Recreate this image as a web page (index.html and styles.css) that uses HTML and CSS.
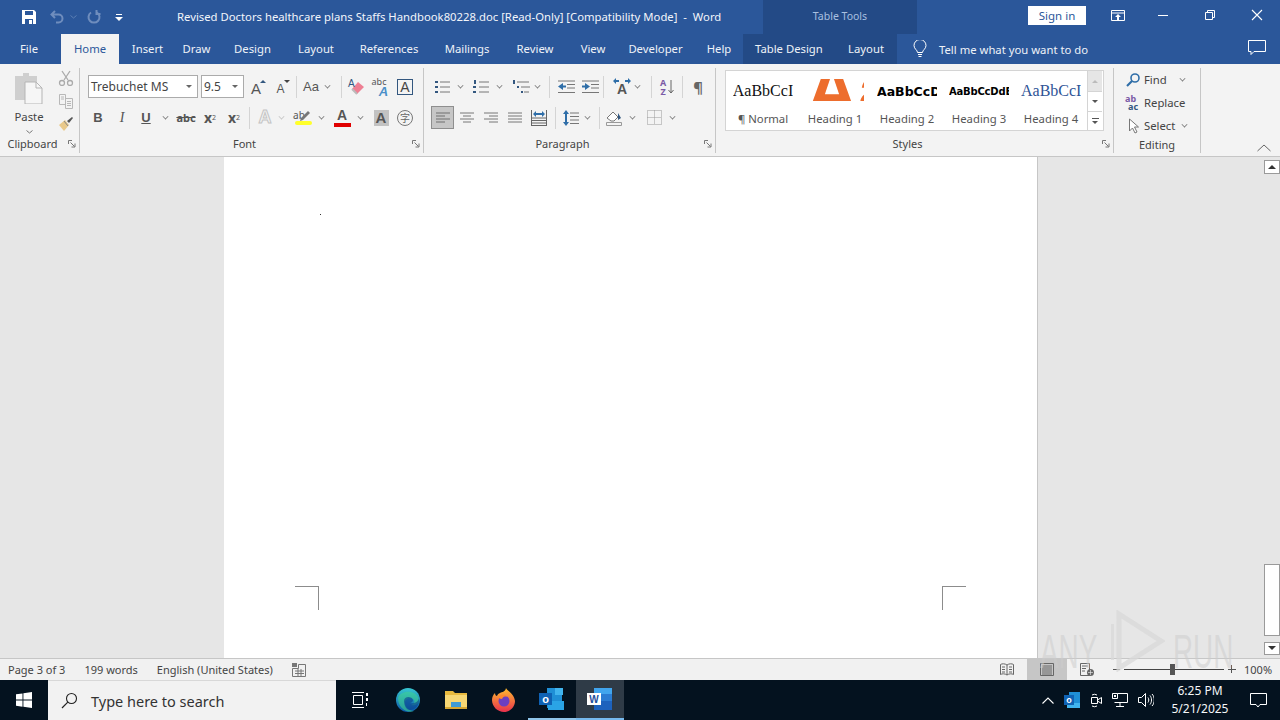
FILE: index.html
```html
<!DOCTYPE html>
<html lang="en">
<head>
    <meta charset="UTF-8">
    <title>Revised Doctors healthcare plans Staffs Handbook80228.doc - Word</title>
    <link rel="stylesheet" href="styles.css">
</head>
<body>
    <!-- Title bar -->
    <header class="titlebar">
        <div class="qat">
            <svg class="qat-save" width="16" height="16" viewBox="0 0 16 16"><path d="M1 1h12l2 2v12H1z" fill="#fff"/><path d="M4 2h8v4H4zM4 10h8v5H4z" fill="#2b579a"/><path d="M8 11h3v4H8z" fill="#fff"/></svg>
            <svg class="qat-undo" width="16" height="14" viewBox="0 0 16 14"><path d="M5 1L1.500 4.500 5 8M2 4.500h6.500a4 4 0 0 1 0 8H6" fill="none" stroke="#6f8dbd" stroke-width="2"/></svg>
            <svg class="qat-caret" width="7" height="4" viewBox="0 0 7 4"><path d="M.5.500l3 2.500 3-2.500" fill="none" stroke="#5c7fb4"/></svg>
            <svg class="qat-redo" width="14" height="14" viewBox="0 0 14 14"><path d="M4 2.500a5.500 5.500 0 1 0 6 0M9.500 0v4h4" fill="none" stroke="#6f8dbd" stroke-width="2"/></svg>
            <svg class="qat-more" width="8" height="8" viewBox="0 0 8 8"><path d="M1 1h6v1H1zM0 4h8L4 8z" fill="#fff"/></svg>
        </div>
        <div class="doc-title">Revised Doctors healthcare plans Staffs Handbook80228.doc [Read-Only] [Compatibility Mode]&nbsp; - &nbsp;Word</div>
        <div class="context-head">Table Tools</div>
        <div class="window-tools">
            <button class="signin">Sign in</button>
            <svg class="win-display" width="14" height="12" viewBox="0 0 14 12"><path d="M.5.500h13v10H.500zM.5 3h13" fill="none" stroke="#fff"/><path d="M7 4l3 3H8v3H6V7H4z" fill="#fff"/></svg>
            <svg class="win-min" width="10" height="1" viewBox="0 0 10 1"><path d="M0 0h10v1H0z" fill="#fff"/></svg>
            <svg class="win-max" width="10" height="10" viewBox="0 0 10 10"><path d="M.5 2.500h7v7h-7zM2.500 2.500v-2h7v7h-2" fill="none" stroke="#fff"/></svg>
            <svg class="win-close" width="12" height="12" viewBox="0 0 12 12"><path d="M1 1l10 10M11 1L1 11" stroke="#fff" stroke-width="1.100"/></svg>
        </div>
    </header>

    <!-- Tabs -->
    <nav class="tabs">
        <div class="tab tab-file">File</div>
        <div class="tab tab-home">Home</div>
        <div class="tab tab-insert">Insert</div>
        <div class="tab tab-draw">Draw</div>
        <div class="tab tab-design">Design</div>
        <div class="tab tab-layout">Layout</div>
        <div class="tab tab-refs">References</div>
        <div class="tab tab-mail">Mailings</div>
        <div class="tab tab-review">Review</div>
        <div class="tab tab-view">View</div>
        <div class="tab tab-dev">Developer</div>
        <div class="tab tab-help">Help</div>
        <div class="context-tabs">
            <div class="tab">Table Design</div>
            <div class="tab">Layout</div>
        </div>
        <div class="tell-me">
            <svg width="14" height="18" viewBox="0 0 14 18"><path d="M4.500 12.500C4.500 10 1 9 1 5.500a6 6 0 0 1 12 0C13 9 9.500 10 9.500 12.500zM5 14.500h4M5.500 16.500h3" fill="none" stroke="#fff"/></svg>
            <span>Tell me what you want to do</span>
        </div>
        <svg class="comment-btn" width="18" height="16" viewBox="0 0 18 16"><path d="M.5.500h17v11H6l-3 3v-3H.500z" fill="none" stroke="#fff"/></svg>
    </nav>

    <!-- Ribbon -->
    <section class="ribbon">
        <div class="group group-clipboard">
            <div class="clipboard-body">
                <div class="paste">
                    <svg width="30" height="32" viewBox="0 0 30 32"><path d="M1 4h8V1h6v3h8v24H1z" fill="#cfcfcf"/><path d="M11 10h11l6 6v16H11z" fill="#f6f6f6" stroke="#b5b5b5"/><path d="M22 10v6h6" fill="none" stroke="#b5b5b5"/></svg>
                    <span class="paste-label">Paste</span>
                    <svg width="7" height="4" viewBox="0 0 7 4"><path d="M.5.500l3 2.500 3-2.500" fill="none" stroke="#777"/></svg>
                </div>
                <div class="clip-tools">
                    <svg width="16" height="16" viewBox="0 0 16 16"><path d="M4 1l6 9M12 1l-6 9" stroke="#aaa" stroke-width="1.300" fill="none"/><circle cx="4" cy="13" r="2.500" fill="none" stroke="#aaa" stroke-width="1.300"/><circle cx="12" cy="13" r="2.500" fill="none" stroke="#aaa" stroke-width="1.300"/></svg>
                    <svg width="16" height="16" viewBox="0 0 16 16"><path d="M1.500 1.500h6v10h-6zM7.500 5.500h7v10h-7zM9 8.500h4M9 10.500h4M9 12.500h4M3 4h3M3 6h3" fill="none" stroke="#b8b8b8"/></svg>
                    <svg width="16" height="16" viewBox="0 0 16 16"><path d="M1 9l6-5 4 5-5 6z" fill="#e9c98a"/><path d="M9 5l5-4 1 1-4 5z" fill="#555"/><path d="M6 5l4 5" stroke="#888"/></svg>
                </div>
            </div>
            <div class="group-foot"><span class="group-name">Clipboard</span><svg class="launcher" width="8" height="8" viewBox="0 0 8 8"><path d="M.5 4V.500H4M2.500 2.500l4 4M7 3.500V7H3.500" fill="none" stroke="#777"/></svg></div>
        </div>

        <div class="group group-font">
            <div class="group-rows">
                <div class="row row-font1">
                    <div class="combo combo-font"><span>Trebuchet MS</span><i class="combo-arrow"></i></div>
                    <div class="combo combo-size ml3"><span>9.5</span><i class="combo-arrow"></i></div>
                    <div class="btn w24 ml2"><span class="glyph-a big">A</span><i class="mark-up"></i></div>
                    <div class="btn w24"><span class="glyph-a small">A</span><i class="mark-down"></i></div>
                    <i class="sep mx2"></i>
                    <div class="btn w24"><span class="glyph-aa">Aa</span></div>
                    <div class="btn w8"><i class="caret"></i></div>
                    <i class="sep ml10 mr3"></i>
                    <div class="btn w24">
                        <svg width="18" height="16" viewBox="0 0 18 16"><path d="M9 15l-5-5 6-7 6 5z" fill="#ee7f93"/><path d="M4 10l5 5" stroke="#bbb" stroke-width="2"/></svg>
                        <span class="eraser-a">A</span>
                    </div>
                    <div class="btn w24 stack-abc"><span class="abc-top">abc</span><span class="abc-a">A</span></div>
                    <div class="btn w24"><span class="boxed-a">A</span></div>
                </div>
                <div class="row row-font2">
                    <div class="btn w24 fmt fmt-b">B</div>
                    <div class="btn w24 fmt fmt-i">I</div>
                    <div class="btn w24 fmt fmt-u">U</div>
                    <div class="btn w14"><i class="caret"></i></div>
                    <div class="btn w24 ml2 fmt-strike">abc</div>
                    <div class="btn w24 fmt-script">x<sub>2</sub></div>
                    <div class="btn w24 fmt-script">x<sup>2</sup></div>
                    <i class="sep mx3"></i>
                    <div class="btn w24"><span class="effect-a">A</span></div>
                    <div class="btn w8"><i class="caret caret-light"></i></div>
                    <div class="btn w24 ml6 stack-color"><span class="ab-text">ab</span><svg class="pen" width="12" height="12" viewBox="0 0 12 12"><path d="M1 11l1-3 7-7 2 2-7 7z" fill="#777"/></svg><i class="bar bar-yellow"></i></div>
                    <div class="btn w12"><i class="caret"></i></div>
                    <div class="btn w24 ml3 stack-color"><span class="color-a">A</span><i class="bar bar-red"></i></div>
                    <div class="btn w12"><i class="caret"></i></div>
                    <div class="btn w24 ml3"><span class="shade-a">A</span></div>
                    <div class="btn w24"><span class="circle-char">字</span></div>
                </div>
            </div>
            <div class="group-foot"><span class="group-name">Font</span><svg class="launcher" width="8" height="8" viewBox="0 0 8 8"><path d="M.5 4V.500H4M2.500 2.500l4 4M7 3.500V7H3.500" fill="none" stroke="#777"/></svg></div>
        </div>

        <div class="group group-para">
            <div class="group-rows">
                <div class="row row-para1">
                    <div class="btn w24"><svg width="16" height="14" viewBox="0 0 16 14"><path d="M5 2h10M5 7h10M5 12h10" stroke="#777"/><path d="M0 1h3v2H0zM0 6h3v2H0zM0 11h3v2H0z" fill="#33577f"/></svg></div>
                    <div class="btn w10"><i class="caret"></i></div>
                    <div class="btn w24 ml4"><svg width="16" height="14" viewBox="0 0 16 14"><path d="M6 2h10M6 7h10M6 12h10" stroke="#777"/><path d="M1 0h2v4H1zM0 6h3v2H0zM0 11h3v2H0z" fill="#33577f"/></svg></div>
                    <div class="btn w12"><i class="caret"></i></div>
                    <div class="btn w24 ml5"><svg width="18" height="14" viewBox="0 0 18 14"><path d="M4 2h12M8 7h9M11 12h5" stroke="#777"/><path d="M0 0h2v4H0zM4 6h2v2H4zM8 11h2v2H8z" fill="#33577f"/></svg></div>
                    <div class="btn w6"><i class="caret"></i></div>
                    <i class="sep ml9 mr4"></i>
                    <div class="btn w24"><svg width="18" height="14" viewBox="0 0 18 14"><path d="M1 1h17M10 4.500h8M10 8h8M1 12.500h17" stroke="#777"/><path d="M1 6.500L6 3v2.500h3v2H6V10z" fill="#2f6ea8"/></svg></div>
                    <div class="btn w24"><svg width="18" height="14" viewBox="0 0 18 14"><path d="M1 1h17M10 4.500h8M10 8h8M1 12.500h17" stroke="#777"/><path d="M9 6.500L4 3v2.500H1v2h3V10z" fill="#2f6ea8"/></svg></div>
                    <i class="sep ml1"></i>
                    <div class="btn w24 ml6 stack-spacing"><svg width="18" height="6" viewBox="0 0 18 6"><path d="M0 3l3-3v2h3v2H3v2zM18 3l-3-3v2h-3v2h3v2z" fill="#2f6ea8"/></svg><span class="spacing-a">A</span></div>
                    <div class="btn w6"><i class="caret"></i></div>
                    <i class="sep ml11 mr3"></i>
                    <div class="btn w24 sort-az"><span class="az">A<br>Z</span><svg width="6" height="14" viewBox="0 0 6 14"><path d="M3 0v13M.5 10L3 13l2.500-3" fill="none" stroke="#666"/></svg></div>
                    <i class="sep mx3"></i>
                    <div class="btn w24 pilcrow">¶</div>
                </div>
                <div class="row row-para2">
                    <div class="btn w24 align-on"><svg width="14" height="12" viewBox="0 0 14 12"><path d="M0 1h14M0 4h9M0 7h14M0 10h9" stroke="#6e6e6e"/></svg></div>
                    <div class="btn w24"><svg width="14" height="12" viewBox="0 0 14 12"><path d="M0 1h14M3 4h8M0 7h14M3 10h8" stroke="#777"/></svg></div>
                    <div class="btn w24"><svg width="14" height="12" viewBox="0 0 14 12"><path d="M0 1h14M5 4h9M0 7h14M5 10h9" stroke="#777"/></svg></div>
                    <div class="btn w24"><svg width="14" height="12" viewBox="0 0 14 12"><path d="M0 1h14M0 4h14M0 7h14M0 10h14" stroke="#777"/></svg></div>
                    <div class="btn w24"><svg width="16" height="16" viewBox="0 0 16 16"><path d="M.5 0v16M15.500 0v16M0 8h16M0 10.500h16M0 13h16M0 15.500h16" stroke="#666"/><path d="M2 4l3-3v2h6V1l3 3-3 3V5H5v2z" fill="#2f6ea8"/></svg></div>
                    <i class="sep ml4 mr3"></i>
                    <div class="btn w24"><svg width="16" height="16" viewBox="0 0 16 16"><path d="M7 3h9M7 6.500h9M7 10h9M7 13.500h9" stroke="#777"/><path d="M3 0l3 4H4v8h2l-3 4-3-4h2V4H0z" fill="#2f6ea8"/></svg></div>
                    <div class="btn w8"><i class="caret"></i></div>
                    <i class="sep ml8 mr3"></i>
                    <div class="btn w24"><svg width="18" height="16" viewBox="0 0 18 16"><path d="M1 8l6-6 5 5-4 4H5z" fill="#fff" stroke="#777"/><path d="M12 3l3 5-3 2z" fill="#33577f"/><path d="M.5 12.500h15v3H.500z" fill="#f3f3f3" stroke="#999"/></svg></div>
                    <div class="btn w10"><i class="caret"></i></div>
                    <div class="btn w24 ml5"><svg width="15" height="15" viewBox="0 0 15 15"><path d="M.5.500h14v14H.500zM7.500.500v14M.5 7.500h14" fill="none" stroke="#999" stroke-dasharray="1 1"/></svg></div>
                    <div class="btn w12"><i class="caret"></i></div>
                </div>
            </div>
            <div class="group-foot"><span class="group-name">Paragraph</span><svg class="launcher" width="8" height="8" viewBox="0 0 8 8"><path d="M.5 4V.500H4M2.500 2.500l4 4M7 3.500V7H3.500" fill="none" stroke="#777"/></svg></div>
        </div>

        <div class="group group-styles">
            <div class="gallery-wrap">
                <div class="gallery">
                    <div class="style-item"><div class="preview pv-normal">AaBbCcI</div><div class="style-name">¶ Normal</div></div>
                    <div class="style-item"><div class="preview pv-h1"><span>AaB</span></div><div class="style-name">Heading 1</div></div>
                    <div class="style-item"><div class="preview pv-h2">AaBbCcD</div><div class="style-name">Heading 2</div></div>
                    <div class="style-item"><div class="preview pv-h3">AaBbCcDdE</div><div class="style-name">Heading 3</div></div>
                    <div class="style-item"><div class="preview pv-h4">AaBbCcI</div><div class="style-name">Heading 4</div></div>
                    <div class="gallery-scroll">
                        <div class="gs-btn gs-up"><i class="tri-up"></i></div>
                        <div class="gs-btn"><i class="tri-down"></i></div>
                        <div class="gs-btn gs-more"><i class="more-line"></i><i class="tri-down"></i></div>
                    </div>
                </div>
            </div>
            <div class="group-foot"><span class="group-name">Styles</span><svg class="launcher" width="8" height="8" viewBox="0 0 8 8"><path d="M.5 4V.500H4M2.500 2.500l4 4M7 3.500V7H3.500" fill="none" stroke="#777"/></svg></div>
        </div>

        <div class="group group-editing">
            <div class="edit-list">
                <div class="edit-row">
                    <svg class="edit-icon" width="16" height="16" viewBox="0 0 16 16"><circle cx="10" cy="6" r="4" fill="none" stroke="#2f6ea8" stroke-width="1.600"/><path d="M7 9l-5 5" stroke="#2f6ea8" stroke-width="2.200"/></svg>
                    <span>Find</span><i class="caret find-caret"></i>
                </div>
                <div class="edit-row">
                    <span class="replace-icon"><b>ab</b><b>ac</b></span>
                    <span>Replace</span>
                </div>
                <div class="edit-row">
                    <svg class="edit-icon" width="16" height="16" viewBox="0 0 16 16"><path d="M4.500 1v12l3-3 2.500 5 2-1-2.500-5h4z" fill="#fff" stroke="#777"/></svg>
                    <span>Select</span><i class="caret select-caret"></i>
                </div>
            </div>
            <div class="group-foot"><span class="group-name">Editing</span></div>
        </div>

        <div class="ribbon-tail">
            <svg width="14" height="8" viewBox="0 0 14 8"><path d="M.5 7L7 1l6.500 6" fill="none" stroke="#666"/></svg>
        </div>
    </section>

    <!-- Document area -->
    <main class="workspace">
        <div class="margin-left"></div>
        <div class="page">
            <div class="speck"></div>
            <div class="crop-marks">
                <div class="crop crop-l"></div>
                <div class="crop crop-r"></div>
            </div>
        </div>
        <div class="margin-right"></div>
        <aside class="scrollbar">
            <div class="sb-btn"><i class="sb-up"></i></div>
            <div class="sb-track"><div class="sb-thumb"></div></div>
            <div class="sb-btn"><i class="sb-down"></i></div>
        </aside>
    </main>

    <!-- Status bar -->
    <footer class="statusbar">
        <span class="st-page">Page 3 of 3</span>
        <span class="st-words">199 words</span>
        <span class="st-lang">English (United States)</span>
        <svg class="st-macro" width="14" height="14" viewBox="0 0 14 14"><path d="M0 0h5v4H0z" fill="#777"/><path d="M6.500 1.500h7v12H.500v-8h6zM3 8h9M3 10.500h9M6 6v7M9 6v7" fill="none" stroke="#777"/></svg>
        <div class="st-right">
            <div class="view-btn"><svg width="14" height="13" viewBox="0 0 14 13"><path d="M7 2C5 .500 2 .500.500 1.500v10C2 10.500 5 10.500 7 12c2-1.500 5-1.500 6.500-.500v-10C12 .500 9 .500 7 2zM7 2v10M2 4h3M2 6.500h3M2 9h3M9 4h3M9 6.500h3M9 9h3" fill="none" stroke="#666"/></svg></div>
            <div class="view-btn view-on"><svg width="14" height="13" viewBox="0 0 14 13"><path d="M.5.500h13v12H.500zM2 3h10M2 5h10M2 7h10M2 9h10M2 11h10" fill="none" stroke="#666"/></svg></div>
            <div class="view-btn"><svg width="14" height="13" viewBox="0 0 14 13"><path d="M.5.500h9v12h-9zM2 3h6M2 5.500h4M2 8h3" fill="none" stroke="#666"/><circle cx="10.500" cy="9.500" r="3.500" fill="#666"/><path d="M8 9.500h5M10.500 7v5" stroke="#f1f1f1" stroke-width=".6"/></svg></div>
            <div class="zoom">
                <i class="zoom-minus"></i>
                <div class="zoom-track"><i class="zoom-thumb"></i></div>
                <i class="zoom-plus"></i>
            </div>
            <span class="zoom-value">100%</span>
        </div>
    </footer>

    <!-- Taskbar -->
    <footer class="taskbar">
        <div class="start">
            <svg width="16" height="16" viewBox="0 0 16 16"><path d="M0 2.300l6.500-.9v6.200H0zM7.400 1.300L16 0v7.600H7.400zM0 8.500h6.500v6.200L0 13.700zM7.400 8.500H16V16l-8.600-1.200z" fill="#fff"/></svg>
        </div>
        <div class="search">
            <svg width="17" height="17" viewBox="0 0 17 17"><circle cx="10.500" cy="6.500" r="5" fill="none" stroke="#222" stroke-width="1.100"/><path d="M6.800 10.200L1 16" stroke="#222" stroke-width="1.200"/></svg>
            <span>Type here to search</span>
        </div>
        <div class="task task-view">
            <svg width="16" height="16" viewBox="0 0 16 16"><path d="M1.500 3.500h9v9h-9zM0 .5h12M0 15.500h12" fill="none" stroke="#fff"/><path d="M14 1h2v3h-2zM14 6h2v3h-2zM14 11h1v3h-1z" fill="#fff"/></svg>
        </div>
        <div class="task">
            <svg width="24" height="24" viewBox="0 0 24 24"><defs><linearGradient id="edgeBlue" x1="0" y1="0" x2="0" y2="1"><stop offset="0" stop-color="#37c6d0"/><stop offset="1" stop-color="#0b57a8"/></linearGradient></defs><circle cx="12" cy="12" r="12" fill="url(#edgeBlue)"/><path d="M2 10C4 2 20 1 23 11c1 5-4 7-8 6 3-1 4-3 3-5-2-3-9-2-9 3 0 4 4 8 9 8-7 3-16-3-16-13z" fill="#3fd58c" opacity=".55"/><path d="M8 13c0-5 8-5 9-1 0 2-2 3-3 3 2 1 8 0 9-5 1 8-4 12-9 12-4 0-6-5-6-9z" fill="#0a3f8f" opacity=".6"/></svg>
        </div>
        <div class="task">
            <svg width="22" height="20" viewBox="0 0 22 20"><path d="M0 1h8l2 2h12v5H0z" fill="#e8b93e"/><path d="M0 5h22v14H0z" fill="#f7d774"/><path d="M6 12h10v7H6z" fill="#3e9bd6"/><path d="M0 17h22v2H0z" fill="#d6a632"/></svg>
        </div>
        <div class="task">
            <svg width="24" height="24" viewBox="0 0 24 24"><defs><linearGradient id="foxFill" x1="0" y1="0" x2="0" y2="1"><stop offset="0" stop-color="#ffbd2e"/><stop offset="1" stop-color="#e8304d"/></linearGradient></defs><path d="M14 0c1 3 8 5 9 13 0 6-5 11-11 11S0 19 0 12c0-3 1-5 3-7 0 2 1 3 2 3 1-3 5-4 6-4 1-1 3-2 3-4z" fill="url(#foxFill)"/><circle cx="12" cy="13" r="5.500" fill="#6b3fc0"/><path d="M6 9c3-3 8-3 9 0-3-1-4 0-5 2-2 0-3-1-4-2z" fill="#ff8a2a"/></svg>
        </div>
        <div class="task task-outlook">
            <svg width="26" height="24" viewBox="0 0 26 24"><path d="M8 1h15v20H8z" fill="#1f8fd6"/><path d="M16 1h8v7h-8z" fill="#41b4ee"/><path d="M9 14h16v9H9z" fill="#2aa4e6"/><path d="M0 6h13v12H0z" fill="#0f62b4"/><text x="6.500" y="16" class="icon-letter">o</text></svg>
        </div>
        <div class="task task-word">
            <svg width="26" height="22" viewBox="0 0 26 22"><path d="M7 0h18v22H7z" fill="#1d62bd"/><path d="M7 0h18v6H7z" fill="#41a5ee"/><path d="M7 6h18v7H7z" fill="#2b7cd3"/><path d="M0 5h14v12H0z" fill="#fff"/><text x="7" y="15" class="icon-letter word-letter">W</text></svg>
        </div>
        <div class="tray">
            <svg class="tray-item" width="12" height="7" viewBox="0 0 12 7"><path d="M.5 6.500L6 1l5.500 5.500" fill="none" stroke="#fff" stroke-width="1.100"/></svg>
            <svg class="tray-item" width="16" height="16" viewBox="0 0 16 16"><path d="M5 0h11v12H5z" fill="#1f8fd6"/><path d="M3 11h13v5H3z" fill="#41b4ee"/><path d="M0 3h10v10H0z" fill="#0f62b4"/><text x="5" y="11" class="tray-letter">o</text></svg>
            <svg class="tray-item" width="12" height="16" viewBox="0 0 12 16"><path d="M1.500 5.500h6v6h-6zM7.500 8L11.500 5.500v6L7.500 9M2 3a5 5 0 0 1 5 0M2 14a5 5 0 0 0 5 0" fill="none" stroke="#fff"/></svg>
            <svg class="tray-item" width="16" height="16" viewBox="0 0 16 16"><path d="M.5 1.500h5v5h-5zM5.500 1.500h10v9h-13M8 10.500v4M4 14.500h8" fill="none" stroke="#fff"/><path d="M2 3h2v2H2z" fill="#fff"/></svg>
            <svg class="tray-item" width="16" height="14" viewBox="0 0 16 14"><path d="M.5 4.500h3l4-4v13l-4-4h-3zM10 4.500c1 1.500 1 3.500 0 5M12 2.500c2 2.500 2 6.500 0 9M14 1c3 3 3 9 0 12" fill="none" stroke="#fff"/></svg>
            <div class="clock"><span>6:25 PM</span><span>5/21/2025</span></div>
            <svg class="tray-note" width="17" height="15" viewBox="0 0 17 15"><path d="M.5.500h16v11H10l-2 2.500-2-2.500H.500z" fill="none" stroke="#fff"/></svg>
            <div class="show-desktop"></div>
        </div>
    </footer>

    <!-- Watermark -->
    <div class="watermark">
        <span class="wm-any">ANY</span>
        <svg width="54" height="62" viewBox="0 0 54 62"><path d="M8 4l42 27L8 58z" fill="none" stroke="#d8d8d8" stroke-width="5" stroke-opacity=".75"/><path d="M1 14v36" stroke="#d8d8d8" stroke-width="4" stroke-opacity=".75"/></svg>
        <span class="wm-run">RUN</span>
    </div>
</body>
</html>
```

FILE: styles.css
```css
/* Global */
html, body {
    margin: 0;
    padding: 0;
    width: 1280px;
    height: 720px;
    overflow: hidden;
}

body {
    position: relative;
    display: flex;
    flex-direction: column;
    font-family: "Noto Sans", "Open Sans", sans-serif;
    font-size: 12px;
    color: #444;
    background: #e6e6e6;
}

i {
    display: block;
}

svg {
    display: block;
    flex: none;
}

/* Title bar */
.titlebar {
    display: flex;
    height: 34px;
    background: #2b579a;
    color: #fff;
}

.qat {
    display: flex;
    align-items: center;
    width: 177px;
    flex: none;
    padding-left: 21px;
    box-sizing: border-box;
}

.qat-undo {
    margin-left: 13px;
}

.qat-caret {
    margin-left: 4px;
}

.qat-redo {
    margin-left: 10px;
}

.qat-more {
    margin-left: 14px;
}

.doc-title {
    width: 586px;
    flex: none;
    line-height: 34px;
    font-size: 11.3px;
    white-space: nowrap;
    color: #f2f5fa;
}

.context-head {
    width: 154px;
    flex: none;
    background: #234a86;
    color: #a9c0e0;
    line-height: 32px;
    font-size: 10.5px;
    text-align: center;
}

.window-tools {
    flex: 1;
    display: flex;
    align-items: center;
}

.signin {
    margin-left: 111px;
    margin-bottom: 3px;
    width: 58px;
    height: 19px;
    padding: 0;
    border: none;
    background: #fff;
    color: #2b579a;
    font-family: inherit;
    font-size: 11.5px;
}

.win-display {
    margin-left: 25px;
    margin-bottom: 3px;
}

.win-min {
    margin-left: 33px;
    margin-bottom: 4px;
}

.win-max {
    margin-left: 37px;
    margin-bottom: 4px;
}

.win-close {
    margin-left: 36px;
    margin-bottom: 4px;
}

/* Tabs */
.tabs {
    display: flex;
    height: 30px;
    background: #2b579a;
    color: #eef2f8;
    font-size: 11.3px;
}

.tab {
    line-height: 30px;
    text-align: center;
    white-space: nowrap;
}

.tab-file { width: 61px; padding-right: 3px; box-sizing: border-box; }
.tab-home { width: 58px; background: #f3f3f3; color: #2b579a; }
.tab-insert { width: 57px; }
.tab-draw { width: 41px; }
.tab-design { width: 71px; }
.tab-layout { width: 56px; }
.tab-refs { width: 90px; }
.tab-mail { width: 66px; }
.tab-review { width: 70px; }
.tab-view { width: 46px; }
.tab-dev { width: 79px; }
.tab-help { width: 48px; }

.context-tabs {
    display: flex;
    justify-content: space-between;
    box-sizing: border-box;
    width: 154px;
    padding: 0 13px 0 12px;
    background: #234a86;
}

.tell-me {
    display: flex;
    align-items: center;
    margin-left: 16px;
    gap: 12px;
}

.comment-btn {
    margin: 6px 0 0 auto;
    margin-right: 14px;
}

/* Ribbon */
.ribbon {
    display: flex;
    height: 92px;
    box-sizing: content-box;
    background: #f3f3f3;
    border-bottom: 1px solid #c6c6c6;
}

.group {
    display: flex;
    flex-direction: column;
    margin-top: 4px;
    margin-bottom: 3px;
    border-right: 1px solid #c6c6c6;
    box-sizing: border-box;
}

.group-clipboard { width: 80px; }
.group-font { width: 344px; }
.group-para { width: 292px; }
.group-styles { width: 398px; }
.group-editing { width: 87px; }

.group-foot {
    display: flex;
    align-items: center;
    height: 16px;
    margin-top: auto;
    margin-bottom: 1px;
}

.group-name {
    flex: 1;
    text-align: center;
    font-size: 11px;
    line-height: 16px;
    color: #444;
}

.launcher {
    margin: 0 3px;
}

.group-rows {
    display: flex;
    flex-direction: column;
}

.row {
    display: flex;
    align-items: center;
    height: 23px;
}

.row-font1 {
    margin-top: 7px;
    padding-left: 8px;
}

.row-font2 {
    margin-top: 8px;
    padding-left: 6px;
}

.row-para1 {
    margin-top: 7px;
    padding-left: 7px;
}

.row-para2 {
    margin-top: 8px;
    padding-left: 7px;
}

.btn {
    position: relative;
    display: flex;
    align-items: center;
    justify-content: center;
    flex: none;
    height: 22px;
}

.w6 { width: 6px; }
.w8 { width: 8px; }
.w10 { width: 10px; }
.w12 { width: 12px; }
.w14 { width: 14px; }
.w24 { width: 24px; }

.ml1 { margin-left: 1px; }
.ml2 { margin-left: 2px; }
.ml3 { margin-left: 3px; }
.ml4 { margin-left: 4px; }
.ml5 { margin-left: 5px; }
.ml6 { margin-left: 6px; }
.ml8 { margin-left: 8px; }
.ml9 { margin-left: 9px; }
.ml10 { margin-left: 10px; }
.ml11 { margin-left: 11px; }
.mr3 { margin-right: 3px; }
.mr4 { margin-right: 4px; }
.mx2 { margin: 0 2px; }
.mx3 { margin: 0 3px; }

.sep {
    flex: none;
    width: 1px;
    height: 22px;
    background: #d4d4d4;
}

.caret {
    flex: none;
    width: 4px;
    height: 4px;
    margin-top: -3px;
    border-right: 1px solid #777;
    border-bottom: 1px solid #777;
    transform: rotate(45deg) scale(.85);
}

.caret-light {
    border-color: #c4c4c4;
}

/* Font group */
.combo {
    display: flex;
    align-items: center;
    justify-content: space-between;
    flex: none;
    box-sizing: border-box;
    height: 23px;
    padding: 0 3px 0 2px;
    background: #fff;
    border: 1px solid #ababab;
    color: #444;
    font-size: 12px;
}

.combo-font { width: 110px; }
.combo-size { width: 43px; }

.combo-arrow {
    width: 0;
    height: 0;
    margin-right: 2px;
    border: 3px solid transparent;
    border-top: 3px solid #666;
    border-bottom: none;
}

.glyph-a, .glyph-aa, .effect-a, .color-a, .shade-a, .boxed-a, .abc-a, .eraser-a {
    font-family: "Liberation Sans", sans-serif;
}

.glyph-a {
    color: #555;
    line-height: 1;
}

.glyph-a.big { font-size: 15px; margin-right: 4px; margin-top: 3px; }
.glyph-a.small { font-size: 12px; margin-right: 3px; margin-top: 4px; }

.mark-up, .mark-down {
    position: absolute;
    top: 4px;
    right: 4px;
    width: 0;
    height: 0;
    border: 3px solid transparent;
}

.mark-up {
    border-bottom: 3px solid #33577f;
    border-top: none;
}

.mark-down {
    border-top: 3px solid #444;
    border-bottom: none;
}

.glyph-aa {
    font-size: 13px;
    color: #555;
}

.eraser-a {
    position: absolute;
    left: 3px;
    top: 2px;
    font-size: 10px;
    color: #33577f;
}

.stack-abc {
    flex-direction: column;
}

.abc-top {
    font-size: 9px;
    line-height: 9px;
    margin-right: 4px;
    color: #555;
}

.abc-a {
    font-size: 13px;
    line-height: 11px;
    font-weight: bold;
    font-style: italic;
    margin-left: 5px;
    color: #4a8fc9;
}

.boxed-a {
    box-sizing: border-box;
    width: 16px;
    height: 16px;
    line-height: 14px;
    text-align: center;
    border: 1px solid #33577f;
    font-size: 14px;
    color: #444;
}

.fmt {
    font-family: "Liberation Sans", sans-serif;
    font-size: 13px;
    color: #555;
}

.fmt-b { font-weight: bold; }
.fmt-i { font-style: italic; font-family: "Liberation Serif", serif; font-size: 14px; }
.fmt-u { font-weight: bold; text-decoration: underline; }

.fmt-strike {
    font-size: 11px;
    color: #555;
    font-weight: bold;
    text-decoration: line-through;
}

.fmt-script {
    font-size: 14px;
    font-weight: bold;
    color: #555;
    line-height: 1;
}

.fmt-script sub, .fmt-script sup {
    font-size: 7px;
    font-weight: normal;
}

.effect-a {
    font-size: 18px;
    font-weight: bold;
    color: #f3f3f3;
    -webkit-text-stroke: 1px #c4c4c4;
}

.stack-color {
    flex-direction: column;
}

.ab-text {
    font-size: 10px;
    line-height: 10px;
    margin-right: 8px;
    color: #555;
}

.pen {
    position: absolute;
    right: 4px;
    top: 3px;
}

.bar {
    width: 17px;
    height: 4px;
    margin-top: 1px;
}

.bar-yellow {
    background: #ffff2a;
    border-radius: 2px;
}

.bar-red {
    background: #e00000;
}

.color-a {
    font-size: 14px;
    line-height: 13px;
    font-weight: bold;
    color: #555;
}

.shade-a {
    width: 15px;
    height: 16px;
    line-height: 16px;
    text-align: center;
    background: #c2c2c2;
    color: #555;
    font-size: 15px;
    font-weight: bold;
}

.circle-char {
    box-sizing: border-box;
    width: 16px;
    height: 16px;
    border: 1px solid #777;
    border-radius: 50%;
    font-family: "Noto Sans CJK SC", sans-serif;
    font-size: 10px;
    line-height: 14px;
    text-align: center;
    color: #666;
}

/* Clipboard group */
.clipboard-body {
    display: flex;
}

.paste {
    display: flex;
    flex-direction: column;
    align-items: center;
    width: 58px;
    padding-top: 4px;
    color: #444;
}

.paste svg:first-child {
    margin-right: 0;
}

.paste-label {
    font-size: 11.3px;
    line-height: 16px;
    margin-top: 5px;
}

.paste svg:last-child {
    margin-top: 5px;
}

.clip-tools {
    display: flex;
    flex-direction: column;
    gap: 7px;
    padding-top: 2px;
}

/* Paragraph group */
.align-on {
    box-sizing: border-box;
    width: 23px;
    margin-right: 1px;
    height: 23px;
    background: #c6c6c6;
    border: 1px solid #8e8e8e;
}

.stack-spacing {
    flex-direction: column;
}

.spacing-a {
    font-family: "Liberation Sans", sans-serif;
    font-size: 14px;
    line-height: 11px;
    font-weight: bold;
    color: #555;
}

.sort-az {
    gap: 2px;
}

.az {
    font-size: 9px;
    line-height: 9px;
    font-weight: bold;
    color: #7a5aa6;
    text-align: center;
}

.pilcrow {
    font-size: 15px;
    font-weight: bold;
    color: #666;
}

/* Styles group */
.gallery-wrap {
    padding: 2px 0 0 9px;
}

.gallery {
    display: flex;
    box-sizing: border-box;
    width: 379px;
    height: 61px;
    padding-left: 1px;
    background: #fff;
    border: 1px solid #d4d4d4;
}

.style-item {
    width: 72px;
    flex: none;
    display: flex;
    flex-direction: column;
    align-items: center;
}

.preview {
    display: flex;
    align-items: center;
    justify-content: center;
    width: 60px;
    height: 40px;
    overflow: hidden;
    white-space: nowrap;
}

.style-name {
    font-size: 11.3px;
    line-height: 16px;
    margin-top: 0;
    color: #555;
}

.pv-normal {
    font-family: "Liberation Serif", serif;
    font-size: 16px;
    color: #111;
}

.pv-h1 {
    width: 58px;
    height: 22px;
    margin: 8px 0 10px;
    justify-content: flex-start;
    font-family: "Liberation Sans", sans-serif;
    font-size: 72px;
    font-weight: bold;
    color: #ed6d2d;
}

.pv-h2 {
    justify-content: flex-start;
    font-family: "DejaVu Sans", sans-serif;
    font-size: 12.5px;
    font-weight: bold;
    color: #000;
}

.pv-h3 {
    justify-content: flex-start;
    font-family: "DejaVu Sans", sans-serif;
    font-size: 10px;
    font-weight: bold;
    letter-spacing: -.2px;
    color: #000;
}

.pv-h4 {
    justify-content: flex-start;
    font-family: "Liberation Serif", serif;
    font-size: 16px;
    color: #2f5496;
}

.gallery-scroll {
    display: flex;
    flex-direction: column;
    width: 14px;
    margin-left: 0;
    border-left: 1px solid #d4d4d4;
}

.gs-btn {
    display: flex;
    flex-direction: column;
    align-items: center;
    justify-content: center;
    gap: 2px;
    height: 19px;
    border-bottom: 1px solid #d4d4d4;
}

.gs-up {
    height: 21px;
    background: #e6e6e6;
}

.gs-more {
    border-bottom: none;
}

.tri-up, .tri-down {
    width: 0;
    height: 0;
    border: 3px solid transparent;
}

.tri-up {
    border-bottom: 3px solid #bbb;
    border-top: none;
}

.tri-down {
    border-top: 3px solid #555;
    border-bottom: none;
}

.more-line {
    width: 7px;
    height: 1px;
    background: #555;
}

/* Editing group */
.edit-list {
    display: flex;
    flex-direction: column;
    padding: 0 0 0 11px;
}

.edit-row {
    display: flex;
    align-items: center;
    height: 23px;
    gap: 3px;
    font-size: 11.3px;
    color: #444;
}

.find-caret {
    margin-left: 10px;
}

.select-caret {
    margin-left: 4px;
}

.replace-icon {
    display: flex;
    flex-direction: column;
    width: 16px;
    font-size: 9px;
    line-height: 8px;
    color: #33577f;
}

.replace-icon b:first-child {
    color: #7a5aa6;
}

.replace-icon b:last-child {
    margin-left: 3px;
}

.ribbon-tail {
    flex: 1;
    display: flex;
    align-items: flex-end;
    justify-content: flex-end;
    padding: 0 9px 4px 0;
}

/* Document area */
.workspace {
    flex: 1;
    display: flex;
    min-height: 0;
}

.margin-left {
    width: 224px;
    flex: none;
}

.page {
    display: flex;
    flex-direction: column;
    justify-content: space-between;
    width: 814px;
    flex: none;
    box-sizing: border-box;
    padding: 57px 71px 48px;
    background: #fff;
    border-right: 1px solid #c6c6c6;
}

.speck {
    width: 1px;
    height: 1px;
    margin-left: 25px;
    background: #333;
}

.crop-marks {
    display: flex;
    justify-content: space-between;
}

.crop {
    width: 23px;
    height: 23px;
    border-top: 1px solid #8c8c8c;
}

.crop-l {
    border-right: 1px solid #8c8c8c;
}

.crop-r {
    border-left: 1px solid #8c8c8c;
}

.margin-right {
    flex: 1;
}

.scrollbar {
    display: flex;
    flex-direction: column;
    width: 16px;
    flex: none;
    padding: 3px 0 3px;
    box-sizing: border-box;
    background: #e6e6e6;
}

.sb-btn {
    display: flex;
    align-items: center;
    justify-content: center;
    box-sizing: border-box;
    height: 14px;
    background: #fff;
    border: 1px solid #9a9a9a;
}

.sb-up, .sb-down {
    width: 0;
    height: 0;
    border: 4px solid transparent;
}

.sb-up {
    border-bottom: 4px solid #333;
    border-top: none;
}

.sb-down {
    border-top: 4px solid #333;
    border-bottom: none;
}

.sb-track {
    flex: 1;
    padding: 390px 0 6px;
}

.sb-thumb {
    box-sizing: border-box;
    height: 72px;
    background: #fff;
    border: 1px solid #9a9a9a;
}

/* Status bar */
.statusbar {
    display: flex;
    align-items: center;
    height: 22px;
    background: #f1f1f1;
    border-top: 1px solid #c6c6c6;
    box-sizing: border-box;
    font-size: 11px;
    color: #444;
}

.st-page {
    margin-left: 8px;
}

.st-words {
    margin-left: 19px;
}

.st-lang {
    margin-left: 19px;
}

.st-macro {
    margin-left: 19px;
}

.st-right {
    display: flex;
    align-items: center;
    margin-left: auto;
    height: 100%;
}

.view-btn {
    display: flex;
    align-items: center;
    justify-content: center;
    width: 40px;
    height: 100%;
}

.view-on {
    background: #c6c6c6;
}

.zoom {
    display: flex;
    align-items: center;
    margin-left: 6px;
    gap: 4px;
}

.zoom-minus {
    width: 7px;
    height: 1px;
    background: #555;
}

.zoom-plus {
    position: relative;
    width: 8px;
    height: 1px;
    background: #555;
}

.zoom-plus::after {
    content: "";
    position: absolute;
    left: 3px;
    top: -4px;
    width: 1px;
    height: 8px;
    background: #555;
}

.zoom-track {
    position: relative;
    width: 100px;
    height: 1px;
    background: #444;
}

.zoom-thumb {
    position: absolute;
    left: 46px;
    top: -5px;
    width: 5px;
    height: 11px;
    background: #555;
}

.zoom-value {
    width: 36px;
    margin-left: 8px;
    font-size: 11px;
}

/* Taskbar */
.taskbar {
    display: flex;
    align-items: center;
    height: 40px;
    background: #04121f;
}

.start {
    display: flex;
    align-items: center;
    justify-content: center;
    width: 48px;
    flex: none;
    height: 100%;
}

.search {
    display: flex;
    align-items: center;
    gap: 13px;
    box-sizing: border-box;
    width: 288px;
    flex: none;
    height: 100%;
    padding-left: 13px;
    background: #f2f2f2;
    border-top: 1px solid #d8d8d8;
    font-size: 14.5px;
    color: #333;
}

.task {
    display: flex;
    align-items: center;
    justify-content: center;
    width: 48px;
    flex: none;
    height: 100%;
    box-sizing: border-box;
}

.task-view {
    width: 48px;
}

.task-outlook {
    border-bottom: 2px solid #8fc5ea;
    background: #04121f;
}

.task-word {
    background: #2f3b47;
    border-bottom: 2px solid #76b9ed;
}

.icon-letter {
    font-family: "Liberation Sans", sans-serif;
    font-size: 11px;
    font-weight: bold;
    fill: #fff;
    text-anchor: middle;
}

.word-letter {
    font-size: 10px;
    fill: #1d4f9c;
}

.tray-letter {
    font-family: "Liberation Sans", sans-serif;
    font-size: 9px;
    font-weight: bold;
    fill: #fff;
    text-anchor: middle;
}

.tray {
    display: flex;
    align-items: center;
    flex: 1;
    height: 100%;
    padding-left: 418px;
}

.tray-item {
    margin-right: 10px;
}

.clock {
    display: flex;
    flex-direction: column;
    align-items: center;
    width: 72px;
    margin-left: 0;
    font-size: 12px;
    line-height: 18px;
    color: #f4f6f8;
}

.tray-note {
    margin-left: 14px;
}

.show-desktop {
    width: 1px;
    height: 100%;
    margin-left: 19px;
    background: #4b5560;
}

/* Watermark */
.watermark {
    position: absolute;
    left: 1040px;
    top: 610px;
    display: flex;
    width: 192px;
    height: 62px;
    pointer-events: none;
    font-family: "Liberation Sans", sans-serif;
    font-size: 48px;
    line-height: 62px;
    color: rgba(205, 205, 205, .55);
}

.wm-any, .wm-run {
    display: block;
    width: 60px;
    margin-top: 11px;
    transform-origin: left top;
    transform: scaleX(.58);
    white-space: nowrap;
}

.watermark svg {
    margin-left: 11px;
    margin-right: 8px;
}
```
